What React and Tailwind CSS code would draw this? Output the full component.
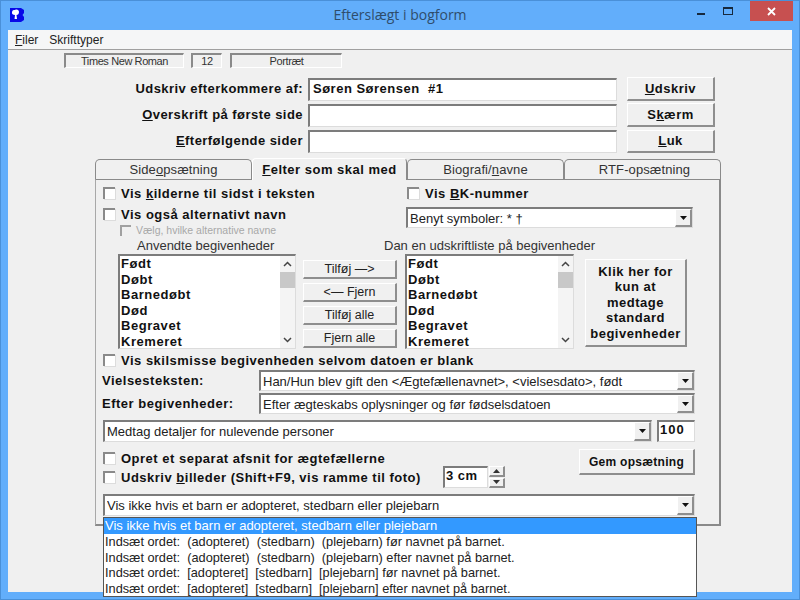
const sunken = 'border-t-2 border-l-2 border-r border-b border-t-[#7c7c7c] border-l-[#7c7c7c] border-r-[#dcdcdc] border-b-[#dcdcdc]';
const raised = 'border-t border-l border-r-2 border-b-2 border-t-white border-l-white border-r-[#8e8e8e] border-b-[#8e8e8e] bg-[#f0f0f0]';
const bold = 'font-bold text-[13px] tracking-[0.5px] text-[#111]';

function Check({ children, small }) {
  return (
    <div className={`flex items-center ${small ? 'gap-[5px] text-[#a8a8a8] text-[10.500px]' : `gap-[6px] ${bold}`}`}>
      <div className={small
        ? 'w-[11px] h-[11px] border-t-2 border-l-2 border-[#a0a0a0] bg-[#f0f0f0]'
        : 'w-[12px] h-[12px] border-t-2 border-l-2 border-[#8a8a8a] bg-white shadow-[1px_1px_0_#dcdcdc]'} />
      <span className="whitespace-nowrap leading-none">{children}</span>
    </div>
  );
}

function Arrow() {
  return (
    <div className={`w-[17px] h-full flex items-center justify-center shrink-0 ${raised}`}>
      <svg width="7" height="4" viewBox="0 0 7 4"><path d="M0 0h7L3.500 4z" fill="#111" /></svg>
    </div>
  );
}

function Combo({ text, className }) {
  return (
    <div className={`flex bg-white pl-[2px] ${sunken} ${className}`}>
      <span className="flex-1 text-[13px] text-[#222] leading-[19px] whitespace-nowrap overflow-hidden">{text}</span>
      <Arrow />
    </div>
  );
}

function ListBox({ className }) {
  const items = ['Født', 'Døbt', 'Barnedøbt', 'Død', 'Begravet', 'Kremeret'];
  return (
    <div className={`flex h-[95px] bg-white ${sunken} ${className}`}>
      <div className={`flex-1 pl-[1px] ${bold} overflow-hidden`}>
        {items.map((it) => <div key={it} className="h-[15.500px] leading-[15px] tracking-[0.55px]">{it}</div>)}
      </div>
      <div className="w-[15px] flex flex-col items-center bg-[#f4f4f4]">
        <svg className="mt-[5px]" width="9" height="6" viewBox="0 0 9 6"><path d="M1 5l3.500-3.500L8 5" fill="none" stroke="#444" strokeWidth="1.500" /></svg>
        <div className="w-full h-[16px] mt-[5px] bg-[#c8c8c8]" />
        <svg className="mt-auto mb-[5px]" width="9" height="6" viewBox="0 0 9 6"><path d="M1 1l3.500 3.500L8 1" fill="none" stroke="#444" strokeWidth="1.500" /></svg>
      </div>
    </div>
  );
}

function Btn({ children, className }) {
  return <div className={`flex items-center justify-center text-center ${raised} ${className}`}>{children}</div>;
}

function Tab({ children, active, className }) {
  return active
    ? <div className={`h-[22px] -mb-[2px] -mt-[1px] flex items-center justify-center rounded-t-[4px] border-t border-l border-r border-t-white border-l-white border-r-[#8a8a8a] bg-[#f0f0f0] relative z-10 ${bold} ${className}`}>{children}</div>
    : <div className={`h-[20px] flex items-center justify-center rounded-t-[5px] border-t border-l border-r border-[#8a8a8a] bg-[#f0f0f0] text-[13px] text-[#333] tracking-[0.1px] ${className}`}>{children}</div>;
}

function Panel({ children, className }) {
  return (
    <div className={`h-[15px] flex items-center justify-center text-[11px] tracking-[-0.4px] text-[#333] border-t-2 border-l-2 border-t-[#8a8a8a] border-l-[#8a8a8a] border-r border-b border-r-white border-b-white ${className}`}>{children}</div>
  );
}

function TopRow({ label, value, btn, className, btnClass }) {
  return (
    <div className={`flex h-[23px] ${className}`}>
      <div className="w-[295px] text-right leading-[22px] whitespace-nowrap font-bold text-[13px] tracking-[0.45px]">{label}</div>
      <div className="w-[309px] ml-[5px] bg-white pl-[3px] text-[13px] font-bold leading-[18px] tracking-[0.5px] whitespace-pre border-t-2 border-l-2 border-r border-b border-t-[#7c7c7c] border-l-[#7c7c7c] border-r-[#dcdcdc] border-b-[#dcdcdc]">{value}</div>
      <Btn className={`w-[88px] ml-[10px] ${bold} ${btnClass}`}>{btn}</Btn>
    </div>
  );
}

export default function App() {
  const options = [
    'Indsæt ordet:  (adopteret)  (stedbarn)  (plejebarn) før navnet på barnet.',
    'Indsæt ordet:  (adopteret)  (stedbarn)  (plejebarn) efter navnet på barnet.',
    'Indsæt ordet:  [adopteret]  [stedbarn]  [plejebarn] før navnet på barnet.',
    'Indsæt ordet:  [adopteret]  [stedbarn]  [plejebarn] efter navnet på barnet.',
  ];

  return (
    <div className="w-[800px] h-[600px] overflow-hidden flex flex-col bg-[#62aefb] px-[8px] pb-[8px] shadow-[inset_0_0_0_1px_#4a90d8] font-['Liberation_Sans',Arial,sans-serif] text-[#111]">
      {/* Titelbjaelke */}
      <div className="h-[30px] shrink-0 flex items-start relative">
        <svg className="mt-[8px] ml-[2px]" width="14" height="14" viewBox="0 0 14 14">
          <path d="M0 0h11l3 2v3l-1.500 2L14 9v3l-3 2H0z" fill="#0808e8" />
          <path d="M5 2c2-1 4 0 4 2s-1 3-2.500 3l.5 4H4.500l.5-4C3 7 1.500 6 2 4s1.500-2 3-2z" fill="#fff" />
        </svg>
        <div className="flex-1 text-center text-[14px] leading-[30px] text-[#2f4d6b] font-['Open_Sans',sans-serif] pl-[79px]">Efterslægt i bogform</div>
        <div className="flex items-start">
          <div className="w-[8px] h-[2px] bg-[#17293d] mt-[13px]" />
          <div className="w-[10px] h-[8px] border border-t-2 border-[#17293d] mt-[7px] ml-[18px]" />
          <div className="w-[43px] h-[20px] bg-[#c75050] ml-[17px] mr-[-1px] mt-[1px] flex items-center justify-center">
            <svg width="9" height="9" viewBox="0 0 9 9"><path d="M1 1l7 7M8 1l-7 7" stroke="#fff" strokeWidth="1.800" /></svg>
          </div>
        </div>
      </div>

      {/* Menu */}
      <div className="h-[20px] shrink-0 flex items-center gap-[11px] pl-[7px] bg-[#f5f6f7] border-b border-[#a0a0a0] text-[12px] text-[#222]">
        <span><u>F</u>iler</span>
        <span>Skrifttyper</span>
      </div>

      <div className="flex-1 bg-[#f0f0f0] relative">
        {/* Statuslinje */}
        <div className="flex pt-[3px] pl-[56px]">
          <Panel className="w-[120px]">Times New Roman</Panel>
          <Panel className="w-[31px] ml-[7px]">12</Panel>
          <Panel className="w-[112px] ml-[8px]">Portræt</Panel>
        </div>

        <TopRow className="mt-[10px]" label="Udskriv efterkommere af:" value="Søren Sørensen  #1" btnClass="-mt-[1px]" btn={<span><u>U</u>dskriv</span>} />
        <TopRow className="mt-[3px]" label={<span><u>O</u>verskrift på første side</span>} btnClass="-mt-[1px]" btn={<span>S<u>k</u>ærm</span>} />
        <TopRow className="mt-[3px]" label={<span><u>E</u>fterfølgende sider</span>} btn={<span><u>L</u>uk</span>} />

        {/* Faneblade */}
        <div className="ml-[87px] w-[626px] mt-[6px]">
          <div className="flex items-start">
            <Tab className="w-[157px]">Side<u>o</u>psætning</Tab>
            <Tab active className="w-[155px]"><span><u>F</u>elter som skal med</span></Tab>
            <Tab className="w-[157px]">Biografi/<u>n</u>avne</Tab>
            <Tab className="w-[157px] pl-[4px]">RTF-opsætning</Tab>
          </div>

          <div className="h-[347px] border-l border-t border-r-2 border-b-2 border-l-[#a8a8a8] border-t-[#8a8a8a] border-r-[#8a8a8a] border-b-[#8a8a8a] text-[#111]">
            <div className="flex pt-[6px]">
              <div className="w-[310px] pl-[7px]">
                <div className="h-[14px] flex items-center"><Check>Vis <u>k</u>ilderne til sidst i teksten</Check></div>
                <div className="h-[14px] mt-[7px] flex items-center"><Check>Vis også alternativt navn</Check></div>
                <div className="h-[14px] mt-[2px] pl-[17px] flex items-center"><Check small>Vælg, hvilke alternative navne</Check></div>
              </div>
              <div>
                <div className="h-[14px] flex items-center pl-[1px]"><Check>Vis <u>B</u>K-nummer</Check></div>
                <Combo className="w-[287px] h-[21px] mt-[7px]" text="Benyt symboler: * †" />
              </div>
            </div>

            <div className="h-[14px] mt-[2px] flex items-center text-[13px] text-[#333] whitespace-nowrap">
              <span className="ml-[41px] w-[247px]">Anvendte begivenheder</span>
              <span>Dan en udskriftliste på begivenheder</span>
            </div>

            <div className="flex mt-[1px]">
              <ListBox className="ml-[22px] w-[178px]" />
              <div className="ml-[7px] w-[94px] pt-[6px] flex flex-col gap-[4px] text-[12.500px] text-[#222]">
                <Btn className="h-[19px]">Tilføj —&gt;</Btn>
                <Btn className="h-[19px]">&lt;— Fjern</Btn>
                <Btn className="h-[19px]">Tilføj alle</Btn>
                <Btn className="h-[19px]">Fjern alle</Btn>
              </div>
              <ListBox className="ml-[8px] w-[169px]" />
              <Btn className={`ml-[11px] mt-[5px] w-[102px] h-[88px] leading-[15.500px] ${bold}`}>Klik her for<br />kun at<br />medtage<br />standard<br />begivenheder</Btn>
            </div>

            <div className="h-[14px] mt-[4px] pl-[7px] flex items-center"><Check>Vis skilsmisse begivenheden selvom datoen er blank</Check></div>

            <div className="flex h-[21px] mt-[3px] pl-[6px]">
              <span className={`w-[157px] leading-[21px] ${bold}`}>Vielsesteksten:</span>
              <Combo className="w-[436px]" text="Han/Hun blev gift den <Ægtefællenavnet>, <vielsesdato>, født" />
            </div>
            <div className="flex h-[21px] mt-[2px] pl-[6px]">
              <span className={`w-[157px] leading-[21px] ${bold}`}>Efter begivenheder:</span>
              <Combo className="w-[436px]" text="Efter ægteskabs oplysninger og før fødselsdatoen" />
            </div>

            <div className="flex h-[22px] mt-[6px] pl-[7px]">
              <Combo className="w-[549px]" text="Medtag detaljer for nulevende personer" />
              <div className={`w-[38px] ml-[5px] bg-white pl-[1px] leading-[16px] ${bold} tracking-[1px] ${sunken}`}>100</div>
            </div>

            <div className="flex h-[39px] mt-[7px] pl-[7px]">
              <div className="w-[476px]">
                <div className="h-[18px] flex items-center"><Check>Opret et separat afsnit for ægtefællerne</Check></div>
                <div className="h-[22px] -mt-[1px] flex items-center">
                  <div className="w-[340px]"><Check>Udskriv <u>b</u>illeder (Shift+F9, vis ramme til foto)</Check></div>
                  <div className={`w-[45px] h-[22px] bg-white pl-[1px] leading-[16px] ${bold} ${sunken}`}>3 cm</div>
                  <div className="w-[16px] h-[22px] ml-[1px] flex flex-col gap-[1px]">
                    <div className={`flex-1 flex items-center justify-center ${raised}`}>
                      <svg width="7" height="4" viewBox="0 0 7 4"><path d="M0 4h7L3.500 0z" fill="#333" /></svg>
                    </div>
                    <div className={`flex-1 flex items-center justify-center ${raised}`}>
                      <svg width="7" height="4" viewBox="0 0 7 4"><path d="M0 0h7L3.500 4z" fill="#333" /></svg>
                    </div>
                  </div>
                </div>
              </div>
              <Btn className="w-[116px] h-[26px] font-bold text-[12px] tracking-[0.3px] text-[#111]">Gem opsætning</Btn>
            </div>

            <div className="mt-[6px] pl-[7px]">
              <Combo className="w-[592px] h-[22px]" text="Vis ikke hvis et barn er adopteret, stedbarn eller plejebarn" />
            </div>
          </div>
        </div>

        {/* Aaben rulleliste */}
        <div className="absolute left-[95px] top-[467px] w-[594px] h-[80px] bg-white border border-[#555] text-[12.750px] text-[#222] whitespace-pre z-20">
          <div className="h-[16px] leading-[15px] pl-[1px] bg-[#3399ff] text-white text-[13px]">Vis ikke hvis et barn er adopteret, stedbarn eller plejebarn</div>
          {options.map((o) => <div key={o} className="h-[15.500px] leading-[15px] pl-[1px]">{o}</div>)}
        </div>
      </div>
    </div>
  );
}
